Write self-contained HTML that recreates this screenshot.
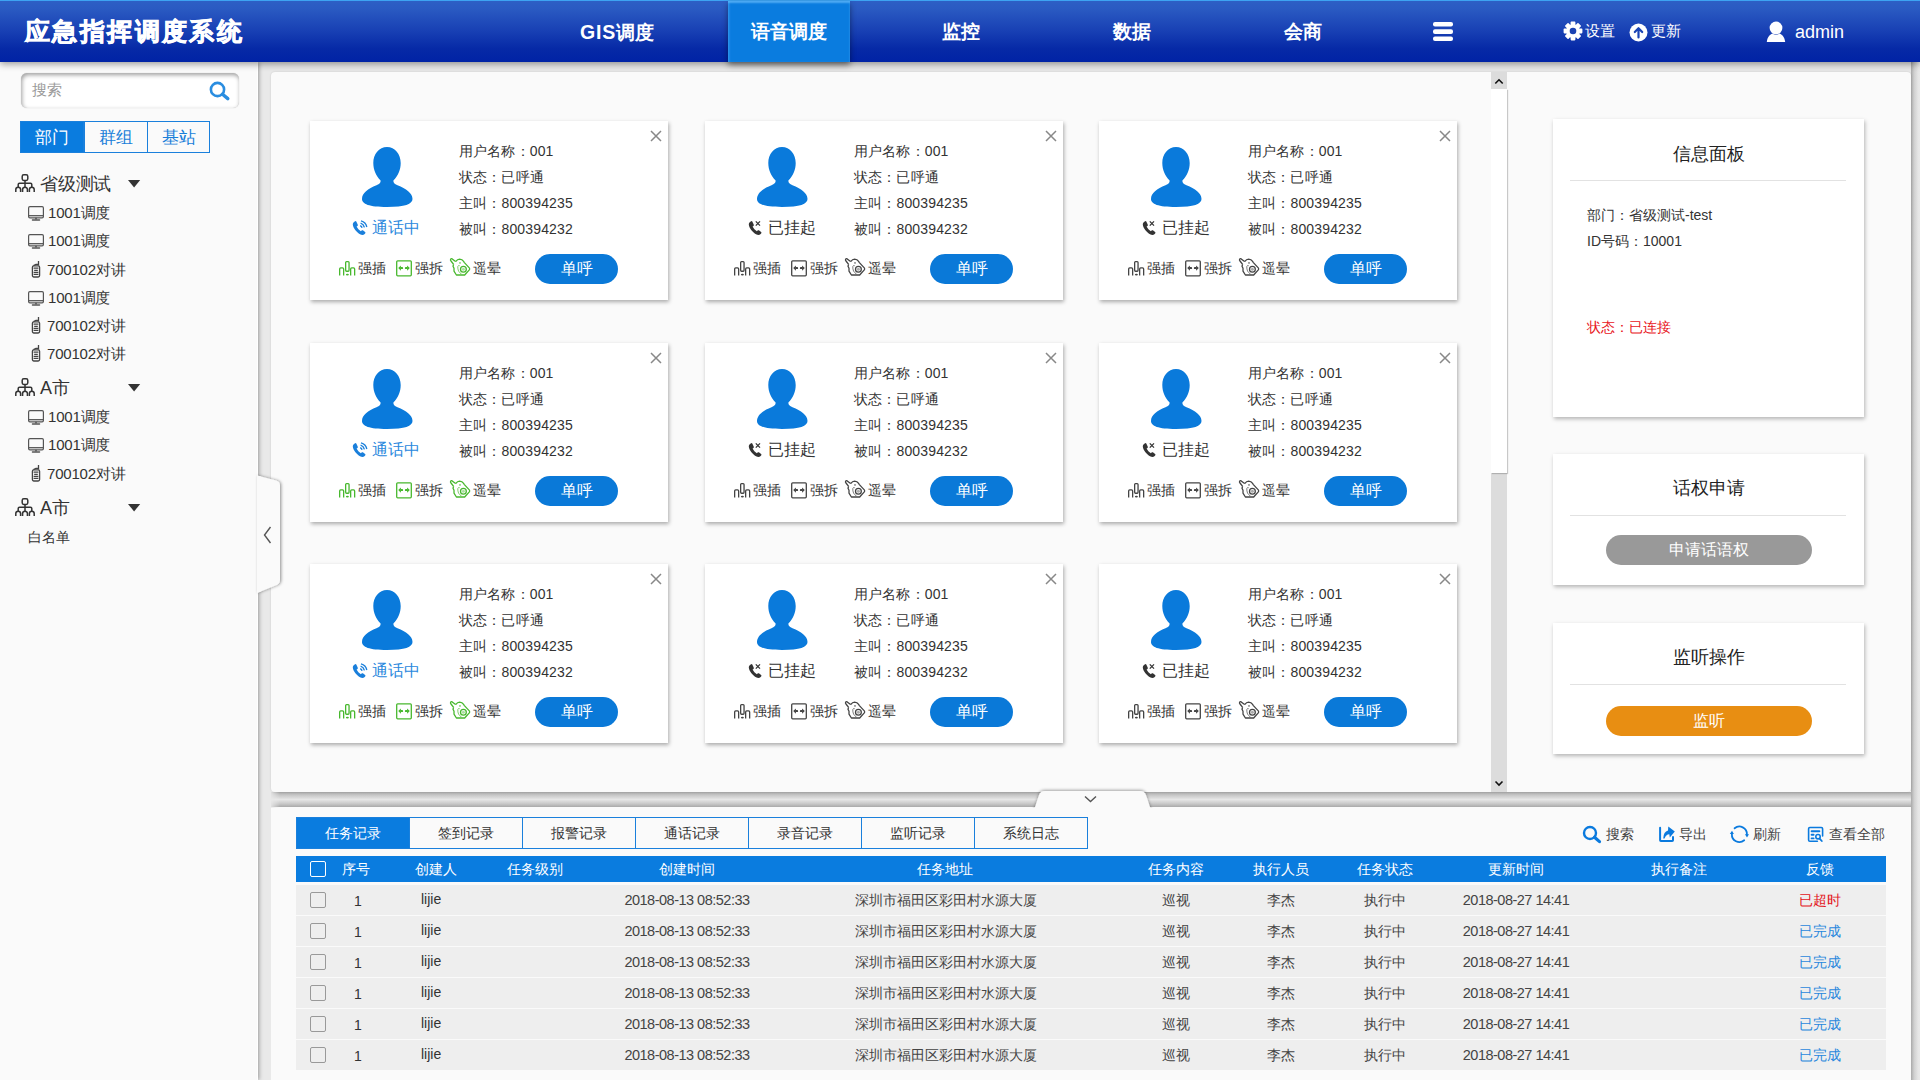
<!DOCTYPE html>
<html><head><meta charset="utf-8"><style>
*{box-sizing:border-box}
html,body{margin:0;padding:0}
body{width:1920px;height:1080px;overflow:hidden;position:relative;background:#e9e9e9;font-family:"Liberation Sans",sans-serif;color:#333}
.a{position:absolute;white-space:nowrap}
svg.a{overflow:visible}
#hdr{position:absolute;left:0;top:0;width:1920px;height:62px;background:linear-gradient(#2d5fc5 0px,#2a5ac2 8px,#1840b4 30px,#0629a6 48px,#0022a5 62px);border-top:1px solid #3da3f2;z-index:20;box-shadow:0 2px 7px rgba(0,0,0,.4)}
#title{position:absolute;left:25px;top:12px;font-size:25px;line-height:36px;font-weight:900;letter-spacing:2.4px;color:#fff;-webkit-text-stroke:.7px #fff}
.nav{position:absolute;top:0px;height:61px;line-height:62px;font-size:19px;font-weight:bold;color:#fff;text-align:center;white-space:nowrap}
.nav.act{background:#0a7cdf;box-shadow:0 3px 6px rgba(0,0,0,.45), inset 0 2px 2px rgba(120,200,255,.6), inset 2px 0 2px rgba(80,170,255,.25)}
#sidebar{position:absolute;left:0;top:62px;width:258px;height:1018px;background:#fafafa;z-index:5;box-shadow:1px 0 4px rgba(0,0,0,.35);border-right:1px solid #fff}
.panel{position:absolute;background:#fafafa;border-radius:4px;box-shadow:0 0 3px rgba(0,0,0,.25)}
.hicon{position:absolute;color:#fff;font-size:15px;line-height:20px;white-space:nowrap}
.sb{position:absolute;white-space:nowrap;color:#333;letter-spacing:-.2px}
.tab{position:absolute;top:121px;height:32px;line-height:31px;font-size:17px;text-align:center;color:#1a7fd9;border:1.5px solid #1a80dc;background:#fafafa}
.tab.on{background:#0a7cdf;color:#fff}
.card{position:absolute;width:358px;height:179px;background:#fff;box-shadow:1px 2px 4px rgba(0,0,0,.32)}
.card .t{position:absolute;left:149px;letter-spacing:.15px;font-size:14px;line-height:20px;color:#333;white-space:nowrap}
.rcard{position:absolute;left:1553px;width:311px;background:#fff;box-shadow:1px 2px 4px rgba(0,0,0,.28)}
.rcard .ttl{position:absolute;left:0;width:311px;text-align:center;font-size:18px;color:#222}
.rcard .sep{position:absolute;left:17px;width:276px;height:1px;background:#e2e2e2}
.btn{position:absolute;border-radius:15px;color:#fff;text-align:center;font-size:16px;line-height:30px;height:30px}
.btab{position:absolute;top:817px;width:114px;height:32px;border:1.5px solid #1a80dc;background:#fafafa;color:#333;text-align:center;font-size:14px;line-height:30px}
.btab.on{background:#0a7cdf;color:#fff}
.row{position:absolute;left:296px;width:1590px;height:30px;background:#eee}
.cell{position:absolute;white-space:nowrap;font-size:14px;line-height:20px;color:#333}
.dt{font-size:14.5px;letter-spacing:-.5px}
.th{position:absolute;top:859px;white-space:nowrap;font-size:14px;line-height:20px;color:#fff}
</style></head><body>
<div id="hdr">
  <div id="title">应急指挥调度系统</div>
  <div class="nav" style="left:556px;width:122px"><span style="letter-spacing:.8px;font-size:19.5px">GIS</span>调度</div>
  <div class="nav act" style="left:728px;width:122px">语音调度</div>
  <div class="nav" style="left:900px;width:122px">监控</div>
  <div class="nav" style="left:1071px;width:122px">数据</div>
  <div class="nav" style="left:1242px;width:122px">会商</div>
  <svg class="a" style="left:1432px;top:20px" width="22" height="22" viewBox="0 0 22 22"><rect x="1" y="1" width="20" height="4.6" rx="2" fill="#fff"/><rect x="1" y="8.3" width="20" height="4.6" rx="2" fill="#fff"/><rect x="1" y="15.5" width="20" height="4.6" rx="2" fill="#fff"/></svg>
  <svg class="a" style="left:1563px;top:20px" width="20" height="20" viewBox="0 0 20 20"><g fill="#fff"><circle cx="10" cy="10" r="6.8"/><rect x="7.6" y="0.6" width="4.8" height="4" rx=".8"/><rect x="7.6" y="15.4" width="4.8" height="4" rx=".8"/><rect x="0.6" y="7.6" width="4" height="4.8" rx=".8"/><rect x="15.4" y="7.6" width="4" height="4.8" rx=".8"/><g transform="rotate(45 10 10)"><rect x="7.6" y="0.6" width="4.8" height="4" rx=".8"/><rect x="7.6" y="15.4" width="4.8" height="4" rx=".8"/><rect x="0.6" y="7.6" width="4" height="4.8" rx=".8"/><rect x="15.4" y="7.6" width="4" height="4.8" rx=".8"/></g></g><circle cx="10" cy="10" r="3.3" fill="#1a42b3"/></svg>
  <div class="hicon" style="left:1585px;top:20px">设置</div>
  <svg class="a" style="left:1629px;top:22px" width="19" height="19" viewBox="0 0 19 19"><circle cx="9.5" cy="9.5" r="9" fill="#fff"/><path d="M9.5 14.5V5.5M5.8 9L9.5 5.2 13.2 9" stroke="#1a44b5" stroke-width="2.2" fill="none" stroke-linecap="round" stroke-linejoin="round"/></svg>
  <div class="hicon" style="left:1651px;top:20px">更新</div>
  <svg class="a" style="left:1766px;top:20px" width="20" height="22" viewBox="0 0 20 22"><circle cx="10" cy="7" r="6.4" fill="#fff"/><path d="M0.8 21C1.5 15.5 4.5 13.2 6.8 12.6 8 13.6 9 14 10 14 11 14 12 13.6 13.2 12.6 15.5 13.2 18.5 15.5 19.2 21Z" fill="#fff"/></svg>
  <div class="a" style="left:1795px;top:19px;font-size:18px;line-height:24px;color:#fff">admin</div>
</div>
<div id="sidebar"></div>
<div class="a" style="z-index:6;left:0;top:0">
<div class="a" style="left:21px;top:73px;width:218px;height:35px;border-radius:6px;background:#fff;box-shadow:inset 1px 2px 4px rgba(0,0,0,.38), 0 0 1px rgba(0,0,0,.25)"></div>
<div class="sb" style="left:32px;top:80px;font-size:15px;line-height:20px;color:#999">搜索</div>
<svg class="a" style="left:209px;top:81px" width="22" height="20" viewBox="0 0 22 20"><circle cx="8.5" cy="8.5" r="6.6" stroke="#2a8de0" stroke-width="2.6" fill="none"/><path d="M13.5 13.2L18.8 17.6" stroke="#2a8de0" stroke-width="3.4" stroke-linecap="round"/></svg>
<div class="tab on" style="left:20px;width:64px">部门</div>
<div class="tab" style="left:83.5px;width:65px">群组</div>
<div class="tab" style="left:147px;width:63px">基站</div>
<svg class="a" style="left:15px;top:174px" width="21" height="19" viewBox="0 0 21 19"><g fill="none" stroke="#333" stroke-width="1.5"><rect x="7.2" y="0.8" width="5.6" height="5.6" rx="1.6"/><path d="M10 6.4V13.2M3.2 13.2V10.6Q3.2 9.2 4.6 9.2H15.4Q16.8 9.2 16.8 10.6V13.2"/><path d="M0.8 18V15.6A2.4 2.4 0 0 1 5.6 15.6V18M7.6 18V15.6A2.4 2.4 0 0 1 12.4 15.6V18M14.4 18V15.6A2.4 2.4 0 0 1 19.2 15.6V18"/></g></svg>
<div class="sb" style="left:40px;top:172px;font-size:18px;line-height:24px;color:#333">省级测试</div>
<svg class="a" style="left:127.5px;top:180px" width="13" height="8" viewBox="0 0 13 8"><path d="M0 0H12.2L6.1 7.4Z" fill="#333"/></svg>
<svg class="a" style="left:28px;top:206px" width="17" height="15" viewBox="0 0 17 15"><g fill="none" stroke="#555" stroke-width="1.2"><rect x="0.6" y="0.6" width="14.8" height="11.2" rx="1.3"/><path d="M0.8 9.7H15.2" stroke-width="1.3"/><path d="M8 11.8V13.6" stroke-width="1.6"/><path d="M4.4 14H11.6" stroke-width="1.3" stroke-linecap="round"/></g></svg>
<div class="sb" style="left:48px;top:203px;font-size:15px;line-height:20px;color:#333">1001调度</div>
<svg class="a" style="left:28px;top:234px" width="17" height="15" viewBox="0 0 17 15"><g fill="none" stroke="#555" stroke-width="1.2"><rect x="0.6" y="0.6" width="14.8" height="11.2" rx="1.3"/><path d="M0.8 9.7H15.2" stroke-width="1.3"/><path d="M8 11.8V13.6" stroke-width="1.6"/><path d="M4.4 14H11.6" stroke-width="1.3" stroke-linecap="round"/></g></svg>
<div class="sb" style="left:48px;top:231px;font-size:15px;line-height:20px;color:#333">1001调度</div>
<svg class="a" style="left:31px;top:260px" width="10" height="18" viewBox="0 0 10 18"><g fill="none" stroke="#444" stroke-width="1.3"><path d="M7.5 1V5.5"/><path d="M2.5 5.6L5 4.3H7.5"/><rect x="1.4" y="5.8" width="7.2" height="11.2" rx="1.4"/><path d="M2.6 8.2H7.4M3.2 10.3H6.8M2.6 12.3H7.4M2.6 14.4H7.4"/></g></svg>
<div class="sb" style="left:47px;top:260px;font-size:15px;line-height:20px;color:#333">700102对讲</div>
<svg class="a" style="left:28px;top:291px" width="17" height="15" viewBox="0 0 17 15"><g fill="none" stroke="#555" stroke-width="1.2"><rect x="0.6" y="0.6" width="14.8" height="11.2" rx="1.3"/><path d="M0.8 9.7H15.2" stroke-width="1.3"/><path d="M8 11.8V13.6" stroke-width="1.6"/><path d="M4.4 14H11.6" stroke-width="1.3" stroke-linecap="round"/></g></svg>
<div class="sb" style="left:48px;top:288px;font-size:15px;line-height:20px;color:#333">1001调度</div>
<svg class="a" style="left:31px;top:316px" width="10" height="18" viewBox="0 0 10 18"><g fill="none" stroke="#444" stroke-width="1.3"><path d="M7.5 1V5.5"/><path d="M2.5 5.6L5 4.3H7.5"/><rect x="1.4" y="5.8" width="7.2" height="11.2" rx="1.4"/><path d="M2.6 8.2H7.4M3.2 10.3H6.8M2.6 12.3H7.4M2.6 14.4H7.4"/></g></svg>
<div class="sb" style="left:47px;top:316px;font-size:15px;line-height:20px;color:#333">700102对讲</div>
<svg class="a" style="left:31px;top:344px" width="10" height="18" viewBox="0 0 10 18"><g fill="none" stroke="#444" stroke-width="1.3"><path d="M7.5 1V5.5"/><path d="M2.5 5.6L5 4.3H7.5"/><rect x="1.4" y="5.8" width="7.2" height="11.2" rx="1.4"/><path d="M2.6 8.2H7.4M3.2 10.3H6.8M2.6 12.3H7.4M2.6 14.4H7.4"/></g></svg>
<div class="sb" style="left:47px;top:344px;font-size:15px;line-height:20px;color:#333">700102对讲</div>
<svg class="a" style="left:15px;top:378px" width="21" height="19" viewBox="0 0 21 19"><g fill="none" stroke="#333" stroke-width="1.5"><rect x="7.2" y="0.8" width="5.6" height="5.6" rx="1.6"/><path d="M10 6.4V13.2M3.2 13.2V10.6Q3.2 9.2 4.6 9.2H15.4Q16.8 9.2 16.8 10.6V13.2"/><path d="M0.8 18V15.6A2.4 2.4 0 0 1 5.6 15.6V18M7.6 18V15.6A2.4 2.4 0 0 1 12.4 15.6V18M14.4 18V15.6A2.4 2.4 0 0 1 19.2 15.6V18"/></g></svg>
<div class="sb" style="left:40px;top:376px;font-size:18px;line-height:24px;color:#333">A市</div>
<svg class="a" style="left:127.5px;top:384px" width="13" height="8" viewBox="0 0 13 8"><path d="M0 0H12.2L6.1 7.4Z" fill="#333"/></svg>
<svg class="a" style="left:28px;top:410px" width="17" height="15" viewBox="0 0 17 15"><g fill="none" stroke="#555" stroke-width="1.2"><rect x="0.6" y="0.6" width="14.8" height="11.2" rx="1.3"/><path d="M0.8 9.7H15.2" stroke-width="1.3"/><path d="M8 11.8V13.6" stroke-width="1.6"/><path d="M4.4 14H11.6" stroke-width="1.3" stroke-linecap="round"/></g></svg>
<div class="sb" style="left:48px;top:407px;font-size:15px;line-height:20px;color:#333">1001调度</div>
<svg class="a" style="left:28px;top:438px" width="17" height="15" viewBox="0 0 17 15"><g fill="none" stroke="#555" stroke-width="1.2"><rect x="0.6" y="0.6" width="14.8" height="11.2" rx="1.3"/><path d="M0.8 9.7H15.2" stroke-width="1.3"/><path d="M8 11.8V13.6" stroke-width="1.6"/><path d="M4.4 14H11.6" stroke-width="1.3" stroke-linecap="round"/></g></svg>
<div class="sb" style="left:48px;top:435px;font-size:15px;line-height:20px;color:#333">1001调度</div>
<svg class="a" style="left:31px;top:464px" width="10" height="18" viewBox="0 0 10 18"><g fill="none" stroke="#444" stroke-width="1.3"><path d="M7.5 1V5.5"/><path d="M2.5 5.6L5 4.3H7.5"/><rect x="1.4" y="5.8" width="7.2" height="11.2" rx="1.4"/><path d="M2.6 8.2H7.4M3.2 10.3H6.8M2.6 12.3H7.4M2.6 14.4H7.4"/></g></svg>
<div class="sb" style="left:47px;top:464px;font-size:15px;line-height:20px;color:#333">700102对讲</div>
<svg class="a" style="left:15px;top:498px" width="21" height="19" viewBox="0 0 21 19"><g fill="none" stroke="#333" stroke-width="1.5"><rect x="7.2" y="0.8" width="5.6" height="5.6" rx="1.6"/><path d="M10 6.4V13.2M3.2 13.2V10.6Q3.2 9.2 4.6 9.2H15.4Q16.8 9.2 16.8 10.6V13.2"/><path d="M0.8 18V15.6A2.4 2.4 0 0 1 5.6 15.6V18M7.6 18V15.6A2.4 2.4 0 0 1 12.4 15.6V18M14.4 18V15.6A2.4 2.4 0 0 1 19.2 15.6V18"/></g></svg>
<div class="sb" style="left:40px;top:496px;font-size:18px;line-height:24px;color:#333">A市</div>
<svg class="a" style="left:127.5px;top:504px" width="13" height="8" viewBox="0 0 13 8"><path d="M0 0H12.2L6.1 7.4Z" fill="#333"/></svg>
<div class="sb" style="left:28px;top:527px;font-size:14px;line-height:20px;color:#333">白名单</div>
</div>
<svg class="a" style="left:257px;top:470px;z-index:7" width="40" height="130" viewBox="0 0 40 130"><defs><filter id="hs" x="-50%" y="-20%" width="200%" height="140%"><feDropShadow dx="1.2" dy="0" stdDeviation="1.4" flood-opacity=".4"/></filter></defs><path d="M0 5.6L19 10.4Q23 11.4 23 15.6V110Q23 114 19 115.2L0 123Z" fill="#fafafa" filter="url(#hs)"/><path d="M0 5.6L4 6.56V121.5L0 123Z" fill="#fafafa"/><path d="M13.5 57L7.5 65 13.5 73" stroke="#555" stroke-width="1.4" fill="none"/></svg>
<div class="a" style="left:1911px;top:62px;width:9px;height:1018px;background:linear-gradient(to right,#a9a9a9,#d0d0d0 35%,#e6e6e6 80%,#e8e8e8)"></div>
<div class="a" style="left:271px;top:791px;width:1640px;height:17px;background:linear-gradient(#fafafa 0,#fafafa 1px,#a9a9a9 1px,#c6c6c6 4px,#e6e6e6 8.5px,#c6c6c6 13px,#a9a9a9 16px,#fafafa 16px);-webkit-mask-image:linear-gradient(to right,rgba(0,0,0,.15) 0,#000 9px)"></div>
<div class="panel" style="left:271px;top:72px;width:1640px;height:720px;box-shadow:0 0 2px rgba(0,0,0,.15)"></div>
<div class="a" style="left:1491px;top:72px;width:16px;height:720px;background:#dcdcdc"></div>
<div class="a" style="left:1491px;top:89px;width:16px;height:384px;background:#fff;box-shadow:1px 1px 1px rgba(0,0,0,.2)"></div>
<svg class="a" style="left:1491px;top:72px" width="16" height="17" viewBox="0 0 16 17"><path d="M4.3 11.5L8 7.8 11.7 11.5" stroke="#111" stroke-width="1.6" fill="none"/></svg>
<svg class="a" style="left:1491px;top:776px" width="16" height="16" viewBox="0 0 16 16"><path d="M4.5 5.5L8 9 11.5 5.5" stroke="#111" stroke-width="1.6" fill="none"/></svg>
<div class="card" style="left:310px;top:121px">
<svg class="a" style="left:340px;top:9px" width="12" height="12" viewBox="0 0 12 12"><path d="M1 1L11 11M11 1L1 11" stroke="#888" stroke-width="1.5"/></svg>
<svg class="a" style="left:51px;top:25px" width="52" height="62" viewBox="0 0 52 62"><path d="M26 1C18 1 12.3 8 12.3 17 12.3 24 15 29.5 19.6 34.6 19.8 36.8 18.6 38 15.5 39.2 7 42.5 1 47 1 53 1 58 8 61 26 61 44 61 51.5 58 51.5 53 51.5 47 45 42.5 36.5 39.2 33.4 38 32.2 36.8 32.4 34.6 37 29.5 39.7 24 39.7 17 39.7 8 34 1 26 1Z" fill="#0a7adb"/></svg>
<svg class="a" style="left:42px;top:99px" width="16" height="16" viewBox="0 0 16 16"><path d="M3.2 1.2C2 1.6 0.7 2.8 0.8 4.6 1 7.8 4.5 12.6 8.6 14.6 10.2 15.3 11.8 14.9 12.7 13.9L13.3 13.2C13.6 12.8 13.5 12.2 13.1 11.9L10.9 10.3C10.5 10 9.9 10.1 9.6 10.5L8.9 11.3C7.2 10.4 5.4 8.4 4.6 6.6L5.5 5.9C5.9 5.6 6 5 5.7 4.6L4.3 1.6C4.1 1.2 3.6 1 3.2 1.2Z" fill="#1a7fdb"/><path d="M8.2 5.6Q9.6 6.2 10.1 7.8M8.6 3.2Q11.6 4.2 12.4 7.4M9 0.9Q13.8 2.2 14.8 7" stroke="#1a7fdb" stroke-width="1.4" fill="none"/></svg>
<div class="a" style="left:62px;top:96px;font-size:16px;line-height:22px;color:#2a88dd">通话中</div>
<div class="t" style="top:20px">用户名称：001</div>
<div class="t" style="top:46px">状态：已呼通</div>
<div class="t" style="top:72px">主叫：800394235</div>
<div class="t" style="top:98px">被叫：800394232</div>
<svg class="a" style="left:29px;top:139px" width="17" height="17" viewBox="0 0 17 17"><g fill="none" stroke="#48b82e" stroke-width="1.3"><path d="M0.65 15.6V8.9Q0.65 7.8 1.7 7.8H3.6Q4.65 7.8 4.65 8.9V15.6"/><path d="M11.65 15.6V8.9Q11.65 7.8 12.7 7.8H14.6Q15.65 7.8 15.65 8.9V15.6"/><rect x="6.65" y="1.65" width="3.4" height="9.6" rx="0.9"/></g><ellipse cx="8.35" cy="14.6" rx="1.5" ry="0.95" fill="#48b82e"/></svg><svg class="a" style="left:86px;top:139px" width="16" height="17" viewBox="0 0 16 17"><rect x="0.7" y="0.8" width="14.6" height="15" rx="1" fill="none" stroke="#48b82e" stroke-width="1.3"/><path d="M2.2 8.1L4.9 5.4V10.8ZM13.8 8.1L11.1 5.4V10.8Z" fill="#48b82e"/><rect x="4.3" y="7.1" width="2.8" height="2" rx=".9" fill="#48b82e"/><rect x="8.9" y="7.1" width="2.8" height="2" rx=".9" fill="#48b82e"/></svg><svg class="a" style="left:140px;top:136.5px" width="21" height="19" viewBox="0 0 21 19"><g fill="none" stroke="#48b82e" stroke-width="1.3" stroke-linejoin="round"><path d="M5.6 3.6L2.2 0.9Q1.1 0.3 0.6 1.2Q0.2 2.2 1 3L3.6 6.4"/><path d="M5.6 3.6Q7.6 1.1 9.5 1.1Q12.3 1.4 13.4 3.2L14.4 4.6L19.3 9.9Q20.1 10.9 19.3 11.9L14.7 17H6.4L4 13.1V10.3L3 8.2L3.6 6.4"/><circle cx="13.4" cy="11.3" r="2.9"/><path d="M11.4 16.2L8.6 13.2Q7.6 10.8 7.8 8.6Q8.3 7 9.7 7.7" stroke-width="1" opacity=".7"/></g><circle cx="13.4" cy="11.3" r="1.5" fill="#48b82e" opacity=".45"/><ellipse cx="10" cy="4.9" rx=".9" ry=".6" fill="#48b82e"/></svg>
<div class="a" style="left:48px;top:137px;font-size:14px;line-height:20px;color:#333">强插</div>
<div class="a" style="left:105px;top:137px;font-size:14px;line-height:20px;color:#333">强拆</div>
<div class="a" style="left:163px;top:137px;font-size:14px;line-height:20px;color:#333">遥晕</div>
<div class="btn" style="left:225px;top:133px;width:83px;background:#0a79d8">单呼</div>
</div>
<div class="card" style="left:705px;top:121px">
<svg class="a" style="left:340px;top:9px" width="12" height="12" viewBox="0 0 12 12"><path d="M1 1L11 11M11 1L1 11" stroke="#888" stroke-width="1.5"/></svg>
<svg class="a" style="left:51px;top:25px" width="52" height="62" viewBox="0 0 52 62"><path d="M26 1C18 1 12.3 8 12.3 17 12.3 24 15 29.5 19.6 34.6 19.8 36.8 18.6 38 15.5 39.2 7 42.5 1 47 1 53 1 58 8 61 26 61 44 61 51.5 58 51.5 53 51.5 47 45 42.5 36.5 39.2 33.4 38 32.2 36.8 32.4 34.6 37 29.5 39.7 24 39.7 17 39.7 8 34 1 26 1Z" fill="#0a7adb"/></svg>
<svg class="a" style="left:43px;top:99px" width="14" height="16" viewBox="0 0 14 16"><path d="M3.2 1.2C2 1.6 0.7 2.8 0.8 4.6 1 7.8 4.5 12.6 8.6 14.6 10.2 15.3 11.8 14.9 12.7 13.9L13.3 13.2C13.6 12.8 13.5 12.2 13.1 11.9L10.9 10.3C10.5 10 9.9 10.1 9.6 10.5L8.9 11.3C7.2 10.4 5.4 8.4 4.6 6.6L5.5 5.9C5.9 5.6 6 5 5.7 4.6L4.3 1.6C4.1 1.2 3.6 1 3.2 1.2Z" fill="#333"/><path d="M7.8 1.4L12 5.6M12 1.4L7.8 5.6" stroke="#333" stroke-width="1.3"/></svg>
<div class="a" style="left:63px;top:96px;font-size:16px;line-height:22px;color:#333">已挂起</div>
<div class="t" style="top:20px">用户名称：001</div>
<div class="t" style="top:46px">状态：已呼通</div>
<div class="t" style="top:72px">主叫：800394235</div>
<div class="t" style="top:98px">被叫：800394232</div>
<svg class="a" style="left:29px;top:139px" width="17" height="17" viewBox="0 0 17 17"><g fill="none" stroke="#444" stroke-width="1.3"><path d="M0.65 15.6V8.9Q0.65 7.8 1.7 7.8H3.6Q4.65 7.8 4.65 8.9V15.6"/><path d="M11.65 15.6V8.9Q11.65 7.8 12.7 7.8H14.6Q15.65 7.8 15.65 8.9V15.6"/><rect x="6.65" y="1.65" width="3.4" height="9.6" rx="0.9"/></g><ellipse cx="8.35" cy="14.6" rx="1.5" ry="0.95" fill="#444"/></svg><svg class="a" style="left:86px;top:139px" width="16" height="17" viewBox="0 0 16 17"><rect x="0.7" y="0.8" width="14.6" height="15" rx="1" fill="none" stroke="#444" stroke-width="1.3"/><path d="M2.2 8.1L4.9 5.4V10.8ZM13.8 8.1L11.1 5.4V10.8Z" fill="#444"/><rect x="4.3" y="7.1" width="2.8" height="2" rx=".9" fill="#444"/><rect x="8.9" y="7.1" width="2.8" height="2" rx=".9" fill="#444"/></svg><svg class="a" style="left:140px;top:136.5px" width="21" height="19" viewBox="0 0 21 19"><g fill="none" stroke="#444" stroke-width="1.3" stroke-linejoin="round"><path d="M5.6 3.6L2.2 0.9Q1.1 0.3 0.6 1.2Q0.2 2.2 1 3L3.6 6.4"/><path d="M5.6 3.6Q7.6 1.1 9.5 1.1Q12.3 1.4 13.4 3.2L14.4 4.6L19.3 9.9Q20.1 10.9 19.3 11.9L14.7 17H6.4L4 13.1V10.3L3 8.2L3.6 6.4"/><circle cx="13.4" cy="11.3" r="2.9"/><path d="M11.4 16.2L8.6 13.2Q7.6 10.8 7.8 8.6Q8.3 7 9.7 7.7" stroke-width="1" opacity=".7"/></g><circle cx="13.4" cy="11.3" r="1.5" fill="#444" opacity=".45"/><ellipse cx="10" cy="4.9" rx=".9" ry=".6" fill="#444"/></svg>
<div class="a" style="left:48px;top:137px;font-size:14px;line-height:20px;color:#333">强插</div>
<div class="a" style="left:105px;top:137px;font-size:14px;line-height:20px;color:#333">强拆</div>
<div class="a" style="left:163px;top:137px;font-size:14px;line-height:20px;color:#333">遥晕</div>
<div class="btn" style="left:225px;top:133px;width:83px;background:#0a79d8">单呼</div>
</div>
<div class="card" style="left:1099px;top:121px">
<svg class="a" style="left:340px;top:9px" width="12" height="12" viewBox="0 0 12 12"><path d="M1 1L11 11M11 1L1 11" stroke="#888" stroke-width="1.5"/></svg>
<svg class="a" style="left:51px;top:25px" width="52" height="62" viewBox="0 0 52 62"><path d="M26 1C18 1 12.3 8 12.3 17 12.3 24 15 29.5 19.6 34.6 19.8 36.8 18.6 38 15.5 39.2 7 42.5 1 47 1 53 1 58 8 61 26 61 44 61 51.5 58 51.5 53 51.5 47 45 42.5 36.5 39.2 33.4 38 32.2 36.8 32.4 34.6 37 29.5 39.7 24 39.7 17 39.7 8 34 1 26 1Z" fill="#0a7adb"/></svg>
<svg class="a" style="left:43px;top:99px" width="14" height="16" viewBox="0 0 14 16"><path d="M3.2 1.2C2 1.6 0.7 2.8 0.8 4.6 1 7.8 4.5 12.6 8.6 14.6 10.2 15.3 11.8 14.9 12.7 13.9L13.3 13.2C13.6 12.8 13.5 12.2 13.1 11.9L10.9 10.3C10.5 10 9.9 10.1 9.6 10.5L8.9 11.3C7.2 10.4 5.4 8.4 4.6 6.6L5.5 5.9C5.9 5.6 6 5 5.7 4.6L4.3 1.6C4.1 1.2 3.6 1 3.2 1.2Z" fill="#333"/><path d="M7.8 1.4L12 5.6M12 1.4L7.8 5.6" stroke="#333" stroke-width="1.3"/></svg>
<div class="a" style="left:63px;top:96px;font-size:16px;line-height:22px;color:#333">已挂起</div>
<div class="t" style="top:20px">用户名称：001</div>
<div class="t" style="top:46px">状态：已呼通</div>
<div class="t" style="top:72px">主叫：800394235</div>
<div class="t" style="top:98px">被叫：800394232</div>
<svg class="a" style="left:29px;top:139px" width="17" height="17" viewBox="0 0 17 17"><g fill="none" stroke="#444" stroke-width="1.3"><path d="M0.65 15.6V8.9Q0.65 7.8 1.7 7.8H3.6Q4.65 7.8 4.65 8.9V15.6"/><path d="M11.65 15.6V8.9Q11.65 7.8 12.7 7.8H14.6Q15.65 7.8 15.65 8.9V15.6"/><rect x="6.65" y="1.65" width="3.4" height="9.6" rx="0.9"/></g><ellipse cx="8.35" cy="14.6" rx="1.5" ry="0.95" fill="#444"/></svg><svg class="a" style="left:86px;top:139px" width="16" height="17" viewBox="0 0 16 17"><rect x="0.7" y="0.8" width="14.6" height="15" rx="1" fill="none" stroke="#444" stroke-width="1.3"/><path d="M2.2 8.1L4.9 5.4V10.8ZM13.8 8.1L11.1 5.4V10.8Z" fill="#444"/><rect x="4.3" y="7.1" width="2.8" height="2" rx=".9" fill="#444"/><rect x="8.9" y="7.1" width="2.8" height="2" rx=".9" fill="#444"/></svg><svg class="a" style="left:140px;top:136.5px" width="21" height="19" viewBox="0 0 21 19"><g fill="none" stroke="#444" stroke-width="1.3" stroke-linejoin="round"><path d="M5.6 3.6L2.2 0.9Q1.1 0.3 0.6 1.2Q0.2 2.2 1 3L3.6 6.4"/><path d="M5.6 3.6Q7.6 1.1 9.5 1.1Q12.3 1.4 13.4 3.2L14.4 4.6L19.3 9.9Q20.1 10.9 19.3 11.9L14.7 17H6.4L4 13.1V10.3L3 8.2L3.6 6.4"/><circle cx="13.4" cy="11.3" r="2.9"/><path d="M11.4 16.2L8.6 13.2Q7.6 10.8 7.8 8.6Q8.3 7 9.7 7.7" stroke-width="1" opacity=".7"/></g><circle cx="13.4" cy="11.3" r="1.5" fill="#444" opacity=".45"/><ellipse cx="10" cy="4.9" rx=".9" ry=".6" fill="#444"/></svg>
<div class="a" style="left:48px;top:137px;font-size:14px;line-height:20px;color:#333">强插</div>
<div class="a" style="left:105px;top:137px;font-size:14px;line-height:20px;color:#333">强拆</div>
<div class="a" style="left:163px;top:137px;font-size:14px;line-height:20px;color:#333">遥晕</div>
<div class="btn" style="left:225px;top:133px;width:83px;background:#0a79d8">单呼</div>
</div>
<div class="card" style="left:310px;top:343px">
<svg class="a" style="left:340px;top:9px" width="12" height="12" viewBox="0 0 12 12"><path d="M1 1L11 11M11 1L1 11" stroke="#888" stroke-width="1.5"/></svg>
<svg class="a" style="left:51px;top:25px" width="52" height="62" viewBox="0 0 52 62"><path d="M26 1C18 1 12.3 8 12.3 17 12.3 24 15 29.5 19.6 34.6 19.8 36.8 18.6 38 15.5 39.2 7 42.5 1 47 1 53 1 58 8 61 26 61 44 61 51.5 58 51.5 53 51.5 47 45 42.5 36.5 39.2 33.4 38 32.2 36.8 32.4 34.6 37 29.5 39.7 24 39.7 17 39.7 8 34 1 26 1Z" fill="#0a7adb"/></svg>
<svg class="a" style="left:42px;top:99px" width="16" height="16" viewBox="0 0 16 16"><path d="M3.2 1.2C2 1.6 0.7 2.8 0.8 4.6 1 7.8 4.5 12.6 8.6 14.6 10.2 15.3 11.8 14.9 12.7 13.9L13.3 13.2C13.6 12.8 13.5 12.2 13.1 11.9L10.9 10.3C10.5 10 9.9 10.1 9.6 10.5L8.9 11.3C7.2 10.4 5.4 8.4 4.6 6.6L5.5 5.9C5.9 5.6 6 5 5.7 4.6L4.3 1.6C4.1 1.2 3.6 1 3.2 1.2Z" fill="#1a7fdb"/><path d="M8.2 5.6Q9.6 6.2 10.1 7.8M8.6 3.2Q11.6 4.2 12.4 7.4M9 0.9Q13.8 2.2 14.8 7" stroke="#1a7fdb" stroke-width="1.4" fill="none"/></svg>
<div class="a" style="left:62px;top:96px;font-size:16px;line-height:22px;color:#2a88dd">通话中</div>
<div class="t" style="top:20px">用户名称：001</div>
<div class="t" style="top:46px">状态：已呼通</div>
<div class="t" style="top:72px">主叫：800394235</div>
<div class="t" style="top:98px">被叫：800394232</div>
<svg class="a" style="left:29px;top:139px" width="17" height="17" viewBox="0 0 17 17"><g fill="none" stroke="#48b82e" stroke-width="1.3"><path d="M0.65 15.6V8.9Q0.65 7.8 1.7 7.8H3.6Q4.65 7.8 4.65 8.9V15.6"/><path d="M11.65 15.6V8.9Q11.65 7.8 12.7 7.8H14.6Q15.65 7.8 15.65 8.9V15.6"/><rect x="6.65" y="1.65" width="3.4" height="9.6" rx="0.9"/></g><ellipse cx="8.35" cy="14.6" rx="1.5" ry="0.95" fill="#48b82e"/></svg><svg class="a" style="left:86px;top:139px" width="16" height="17" viewBox="0 0 16 17"><rect x="0.7" y="0.8" width="14.6" height="15" rx="1" fill="none" stroke="#48b82e" stroke-width="1.3"/><path d="M2.2 8.1L4.9 5.4V10.8ZM13.8 8.1L11.1 5.4V10.8Z" fill="#48b82e"/><rect x="4.3" y="7.1" width="2.8" height="2" rx=".9" fill="#48b82e"/><rect x="8.9" y="7.1" width="2.8" height="2" rx=".9" fill="#48b82e"/></svg><svg class="a" style="left:140px;top:136.5px" width="21" height="19" viewBox="0 0 21 19"><g fill="none" stroke="#48b82e" stroke-width="1.3" stroke-linejoin="round"><path d="M5.6 3.6L2.2 0.9Q1.1 0.3 0.6 1.2Q0.2 2.2 1 3L3.6 6.4"/><path d="M5.6 3.6Q7.6 1.1 9.5 1.1Q12.3 1.4 13.4 3.2L14.4 4.6L19.3 9.9Q20.1 10.9 19.3 11.9L14.7 17H6.4L4 13.1V10.3L3 8.2L3.6 6.4"/><circle cx="13.4" cy="11.3" r="2.9"/><path d="M11.4 16.2L8.6 13.2Q7.6 10.8 7.8 8.6Q8.3 7 9.7 7.7" stroke-width="1" opacity=".7"/></g><circle cx="13.4" cy="11.3" r="1.5" fill="#48b82e" opacity=".45"/><ellipse cx="10" cy="4.9" rx=".9" ry=".6" fill="#48b82e"/></svg>
<div class="a" style="left:48px;top:137px;font-size:14px;line-height:20px;color:#333">强插</div>
<div class="a" style="left:105px;top:137px;font-size:14px;line-height:20px;color:#333">强拆</div>
<div class="a" style="left:163px;top:137px;font-size:14px;line-height:20px;color:#333">遥晕</div>
<div class="btn" style="left:225px;top:133px;width:83px;background:#0a79d8">单呼</div>
</div>
<div class="card" style="left:705px;top:343px">
<svg class="a" style="left:340px;top:9px" width="12" height="12" viewBox="0 0 12 12"><path d="M1 1L11 11M11 1L1 11" stroke="#888" stroke-width="1.5"/></svg>
<svg class="a" style="left:51px;top:25px" width="52" height="62" viewBox="0 0 52 62"><path d="M26 1C18 1 12.3 8 12.3 17 12.3 24 15 29.5 19.6 34.6 19.8 36.8 18.6 38 15.5 39.2 7 42.5 1 47 1 53 1 58 8 61 26 61 44 61 51.5 58 51.5 53 51.5 47 45 42.5 36.5 39.2 33.4 38 32.2 36.8 32.4 34.6 37 29.5 39.7 24 39.7 17 39.7 8 34 1 26 1Z" fill="#0a7adb"/></svg>
<svg class="a" style="left:43px;top:99px" width="14" height="16" viewBox="0 0 14 16"><path d="M3.2 1.2C2 1.6 0.7 2.8 0.8 4.6 1 7.8 4.5 12.6 8.6 14.6 10.2 15.3 11.8 14.9 12.7 13.9L13.3 13.2C13.6 12.8 13.5 12.2 13.1 11.9L10.9 10.3C10.5 10 9.9 10.1 9.6 10.5L8.9 11.3C7.2 10.4 5.4 8.4 4.6 6.6L5.5 5.9C5.9 5.6 6 5 5.7 4.6L4.3 1.6C4.1 1.2 3.6 1 3.2 1.2Z" fill="#333"/><path d="M7.8 1.4L12 5.6M12 1.4L7.8 5.6" stroke="#333" stroke-width="1.3"/></svg>
<div class="a" style="left:63px;top:96px;font-size:16px;line-height:22px;color:#333">已挂起</div>
<div class="t" style="top:20px">用户名称：001</div>
<div class="t" style="top:46px">状态：已呼通</div>
<div class="t" style="top:72px">主叫：800394235</div>
<div class="t" style="top:98px">被叫：800394232</div>
<svg class="a" style="left:29px;top:139px" width="17" height="17" viewBox="0 0 17 17"><g fill="none" stroke="#444" stroke-width="1.3"><path d="M0.65 15.6V8.9Q0.65 7.8 1.7 7.8H3.6Q4.65 7.8 4.65 8.9V15.6"/><path d="M11.65 15.6V8.9Q11.65 7.8 12.7 7.8H14.6Q15.65 7.8 15.65 8.9V15.6"/><rect x="6.65" y="1.65" width="3.4" height="9.6" rx="0.9"/></g><ellipse cx="8.35" cy="14.6" rx="1.5" ry="0.95" fill="#444"/></svg><svg class="a" style="left:86px;top:139px" width="16" height="17" viewBox="0 0 16 17"><rect x="0.7" y="0.8" width="14.6" height="15" rx="1" fill="none" stroke="#444" stroke-width="1.3"/><path d="M2.2 8.1L4.9 5.4V10.8ZM13.8 8.1L11.1 5.4V10.8Z" fill="#444"/><rect x="4.3" y="7.1" width="2.8" height="2" rx=".9" fill="#444"/><rect x="8.9" y="7.1" width="2.8" height="2" rx=".9" fill="#444"/></svg><svg class="a" style="left:140px;top:136.5px" width="21" height="19" viewBox="0 0 21 19"><g fill="none" stroke="#444" stroke-width="1.3" stroke-linejoin="round"><path d="M5.6 3.6L2.2 0.9Q1.1 0.3 0.6 1.2Q0.2 2.2 1 3L3.6 6.4"/><path d="M5.6 3.6Q7.6 1.1 9.5 1.1Q12.3 1.4 13.4 3.2L14.4 4.6L19.3 9.9Q20.1 10.9 19.3 11.9L14.7 17H6.4L4 13.1V10.3L3 8.2L3.6 6.4"/><circle cx="13.4" cy="11.3" r="2.9"/><path d="M11.4 16.2L8.6 13.2Q7.6 10.8 7.8 8.6Q8.3 7 9.7 7.7" stroke-width="1" opacity=".7"/></g><circle cx="13.4" cy="11.3" r="1.5" fill="#444" opacity=".45"/><ellipse cx="10" cy="4.9" rx=".9" ry=".6" fill="#444"/></svg>
<div class="a" style="left:48px;top:137px;font-size:14px;line-height:20px;color:#333">强插</div>
<div class="a" style="left:105px;top:137px;font-size:14px;line-height:20px;color:#333">强拆</div>
<div class="a" style="left:163px;top:137px;font-size:14px;line-height:20px;color:#333">遥晕</div>
<div class="btn" style="left:225px;top:133px;width:83px;background:#0a79d8">单呼</div>
</div>
<div class="card" style="left:1099px;top:343px">
<svg class="a" style="left:340px;top:9px" width="12" height="12" viewBox="0 0 12 12"><path d="M1 1L11 11M11 1L1 11" stroke="#888" stroke-width="1.5"/></svg>
<svg class="a" style="left:51px;top:25px" width="52" height="62" viewBox="0 0 52 62"><path d="M26 1C18 1 12.3 8 12.3 17 12.3 24 15 29.5 19.6 34.6 19.8 36.8 18.6 38 15.5 39.2 7 42.5 1 47 1 53 1 58 8 61 26 61 44 61 51.5 58 51.5 53 51.5 47 45 42.5 36.5 39.2 33.4 38 32.2 36.8 32.4 34.6 37 29.5 39.7 24 39.7 17 39.7 8 34 1 26 1Z" fill="#0a7adb"/></svg>
<svg class="a" style="left:43px;top:99px" width="14" height="16" viewBox="0 0 14 16"><path d="M3.2 1.2C2 1.6 0.7 2.8 0.8 4.6 1 7.8 4.5 12.6 8.6 14.6 10.2 15.3 11.8 14.9 12.7 13.9L13.3 13.2C13.6 12.8 13.5 12.2 13.1 11.9L10.9 10.3C10.5 10 9.9 10.1 9.6 10.5L8.9 11.3C7.2 10.4 5.4 8.4 4.6 6.6L5.5 5.9C5.9 5.6 6 5 5.7 4.6L4.3 1.6C4.1 1.2 3.6 1 3.2 1.2Z" fill="#333"/><path d="M7.8 1.4L12 5.6M12 1.4L7.8 5.6" stroke="#333" stroke-width="1.3"/></svg>
<div class="a" style="left:63px;top:96px;font-size:16px;line-height:22px;color:#333">已挂起</div>
<div class="t" style="top:20px">用户名称：001</div>
<div class="t" style="top:46px">状态：已呼通</div>
<div class="t" style="top:72px">主叫：800394235</div>
<div class="t" style="top:98px">被叫：800394232</div>
<svg class="a" style="left:29px;top:139px" width="17" height="17" viewBox="0 0 17 17"><g fill="none" stroke="#444" stroke-width="1.3"><path d="M0.65 15.6V8.9Q0.65 7.8 1.7 7.8H3.6Q4.65 7.8 4.65 8.9V15.6"/><path d="M11.65 15.6V8.9Q11.65 7.8 12.7 7.8H14.6Q15.65 7.8 15.65 8.9V15.6"/><rect x="6.65" y="1.65" width="3.4" height="9.6" rx="0.9"/></g><ellipse cx="8.35" cy="14.6" rx="1.5" ry="0.95" fill="#444"/></svg><svg class="a" style="left:86px;top:139px" width="16" height="17" viewBox="0 0 16 17"><rect x="0.7" y="0.8" width="14.6" height="15" rx="1" fill="none" stroke="#444" stroke-width="1.3"/><path d="M2.2 8.1L4.9 5.4V10.8ZM13.8 8.1L11.1 5.4V10.8Z" fill="#444"/><rect x="4.3" y="7.1" width="2.8" height="2" rx=".9" fill="#444"/><rect x="8.9" y="7.1" width="2.8" height="2" rx=".9" fill="#444"/></svg><svg class="a" style="left:140px;top:136.5px" width="21" height="19" viewBox="0 0 21 19"><g fill="none" stroke="#444" stroke-width="1.3" stroke-linejoin="round"><path d="M5.6 3.6L2.2 0.9Q1.1 0.3 0.6 1.2Q0.2 2.2 1 3L3.6 6.4"/><path d="M5.6 3.6Q7.6 1.1 9.5 1.1Q12.3 1.4 13.4 3.2L14.4 4.6L19.3 9.9Q20.1 10.9 19.3 11.9L14.7 17H6.4L4 13.1V10.3L3 8.2L3.6 6.4"/><circle cx="13.4" cy="11.3" r="2.9"/><path d="M11.4 16.2L8.6 13.2Q7.6 10.8 7.8 8.6Q8.3 7 9.7 7.7" stroke-width="1" opacity=".7"/></g><circle cx="13.4" cy="11.3" r="1.5" fill="#444" opacity=".45"/><ellipse cx="10" cy="4.9" rx=".9" ry=".6" fill="#444"/></svg>
<div class="a" style="left:48px;top:137px;font-size:14px;line-height:20px;color:#333">强插</div>
<div class="a" style="left:105px;top:137px;font-size:14px;line-height:20px;color:#333">强拆</div>
<div class="a" style="left:163px;top:137px;font-size:14px;line-height:20px;color:#333">遥晕</div>
<div class="btn" style="left:225px;top:133px;width:83px;background:#0a79d8">单呼</div>
</div>
<div class="card" style="left:310px;top:564px">
<svg class="a" style="left:340px;top:9px" width="12" height="12" viewBox="0 0 12 12"><path d="M1 1L11 11M11 1L1 11" stroke="#888" stroke-width="1.5"/></svg>
<svg class="a" style="left:51px;top:25px" width="52" height="62" viewBox="0 0 52 62"><path d="M26 1C18 1 12.3 8 12.3 17 12.3 24 15 29.5 19.6 34.6 19.8 36.8 18.6 38 15.5 39.2 7 42.5 1 47 1 53 1 58 8 61 26 61 44 61 51.5 58 51.5 53 51.5 47 45 42.5 36.5 39.2 33.4 38 32.2 36.8 32.4 34.6 37 29.5 39.7 24 39.7 17 39.7 8 34 1 26 1Z" fill="#0a7adb"/></svg>
<svg class="a" style="left:42px;top:99px" width="16" height="16" viewBox="0 0 16 16"><path d="M3.2 1.2C2 1.6 0.7 2.8 0.8 4.6 1 7.8 4.5 12.6 8.6 14.6 10.2 15.3 11.8 14.9 12.7 13.9L13.3 13.2C13.6 12.8 13.5 12.2 13.1 11.9L10.9 10.3C10.5 10 9.9 10.1 9.6 10.5L8.9 11.3C7.2 10.4 5.4 8.4 4.6 6.6L5.5 5.9C5.9 5.6 6 5 5.7 4.6L4.3 1.6C4.1 1.2 3.6 1 3.2 1.2Z" fill="#1a7fdb"/><path d="M8.2 5.6Q9.6 6.2 10.1 7.8M8.6 3.2Q11.6 4.2 12.4 7.4M9 0.9Q13.8 2.2 14.8 7" stroke="#1a7fdb" stroke-width="1.4" fill="none"/></svg>
<div class="a" style="left:62px;top:96px;font-size:16px;line-height:22px;color:#2a88dd">通话中</div>
<div class="t" style="top:20px">用户名称：001</div>
<div class="t" style="top:46px">状态：已呼通</div>
<div class="t" style="top:72px">主叫：800394235</div>
<div class="t" style="top:98px">被叫：800394232</div>
<svg class="a" style="left:29px;top:139px" width="17" height="17" viewBox="0 0 17 17"><g fill="none" stroke="#48b82e" stroke-width="1.3"><path d="M0.65 15.6V8.9Q0.65 7.8 1.7 7.8H3.6Q4.65 7.8 4.65 8.9V15.6"/><path d="M11.65 15.6V8.9Q11.65 7.8 12.7 7.8H14.6Q15.65 7.8 15.65 8.9V15.6"/><rect x="6.65" y="1.65" width="3.4" height="9.6" rx="0.9"/></g><ellipse cx="8.35" cy="14.6" rx="1.5" ry="0.95" fill="#48b82e"/></svg><svg class="a" style="left:86px;top:139px" width="16" height="17" viewBox="0 0 16 17"><rect x="0.7" y="0.8" width="14.6" height="15" rx="1" fill="none" stroke="#48b82e" stroke-width="1.3"/><path d="M2.2 8.1L4.9 5.4V10.8ZM13.8 8.1L11.1 5.4V10.8Z" fill="#48b82e"/><rect x="4.3" y="7.1" width="2.8" height="2" rx=".9" fill="#48b82e"/><rect x="8.9" y="7.1" width="2.8" height="2" rx=".9" fill="#48b82e"/></svg><svg class="a" style="left:140px;top:136.5px" width="21" height="19" viewBox="0 0 21 19"><g fill="none" stroke="#48b82e" stroke-width="1.3" stroke-linejoin="round"><path d="M5.6 3.6L2.2 0.9Q1.1 0.3 0.6 1.2Q0.2 2.2 1 3L3.6 6.4"/><path d="M5.6 3.6Q7.6 1.1 9.5 1.1Q12.3 1.4 13.4 3.2L14.4 4.6L19.3 9.9Q20.1 10.9 19.3 11.9L14.7 17H6.4L4 13.1V10.3L3 8.2L3.6 6.4"/><circle cx="13.4" cy="11.3" r="2.9"/><path d="M11.4 16.2L8.6 13.2Q7.6 10.8 7.8 8.6Q8.3 7 9.7 7.7" stroke-width="1" opacity=".7"/></g><circle cx="13.4" cy="11.3" r="1.5" fill="#48b82e" opacity=".45"/><ellipse cx="10" cy="4.9" rx=".9" ry=".6" fill="#48b82e"/></svg>
<div class="a" style="left:48px;top:137px;font-size:14px;line-height:20px;color:#333">强插</div>
<div class="a" style="left:105px;top:137px;font-size:14px;line-height:20px;color:#333">强拆</div>
<div class="a" style="left:163px;top:137px;font-size:14px;line-height:20px;color:#333">遥晕</div>
<div class="btn" style="left:225px;top:133px;width:83px;background:#0a79d8">单呼</div>
</div>
<div class="card" style="left:705px;top:564px">
<svg class="a" style="left:340px;top:9px" width="12" height="12" viewBox="0 0 12 12"><path d="M1 1L11 11M11 1L1 11" stroke="#888" stroke-width="1.5"/></svg>
<svg class="a" style="left:51px;top:25px" width="52" height="62" viewBox="0 0 52 62"><path d="M26 1C18 1 12.3 8 12.3 17 12.3 24 15 29.5 19.6 34.6 19.8 36.8 18.6 38 15.5 39.2 7 42.5 1 47 1 53 1 58 8 61 26 61 44 61 51.5 58 51.5 53 51.5 47 45 42.5 36.5 39.2 33.4 38 32.2 36.8 32.4 34.6 37 29.5 39.7 24 39.7 17 39.7 8 34 1 26 1Z" fill="#0a7adb"/></svg>
<svg class="a" style="left:43px;top:99px" width="14" height="16" viewBox="0 0 14 16"><path d="M3.2 1.2C2 1.6 0.7 2.8 0.8 4.6 1 7.8 4.5 12.6 8.6 14.6 10.2 15.3 11.8 14.9 12.7 13.9L13.3 13.2C13.6 12.8 13.5 12.2 13.1 11.9L10.9 10.3C10.5 10 9.9 10.1 9.6 10.5L8.9 11.3C7.2 10.4 5.4 8.4 4.6 6.6L5.5 5.9C5.9 5.6 6 5 5.7 4.6L4.3 1.6C4.1 1.2 3.6 1 3.2 1.2Z" fill="#333"/><path d="M7.8 1.4L12 5.6M12 1.4L7.8 5.6" stroke="#333" stroke-width="1.3"/></svg>
<div class="a" style="left:63px;top:96px;font-size:16px;line-height:22px;color:#333">已挂起</div>
<div class="t" style="top:20px">用户名称：001</div>
<div class="t" style="top:46px">状态：已呼通</div>
<div class="t" style="top:72px">主叫：800394235</div>
<div class="t" style="top:98px">被叫：800394232</div>
<svg class="a" style="left:29px;top:139px" width="17" height="17" viewBox="0 0 17 17"><g fill="none" stroke="#444" stroke-width="1.3"><path d="M0.65 15.6V8.9Q0.65 7.8 1.7 7.8H3.6Q4.65 7.8 4.65 8.9V15.6"/><path d="M11.65 15.6V8.9Q11.65 7.8 12.7 7.8H14.6Q15.65 7.8 15.65 8.9V15.6"/><rect x="6.65" y="1.65" width="3.4" height="9.6" rx="0.9"/></g><ellipse cx="8.35" cy="14.6" rx="1.5" ry="0.95" fill="#444"/></svg><svg class="a" style="left:86px;top:139px" width="16" height="17" viewBox="0 0 16 17"><rect x="0.7" y="0.8" width="14.6" height="15" rx="1" fill="none" stroke="#444" stroke-width="1.3"/><path d="M2.2 8.1L4.9 5.4V10.8ZM13.8 8.1L11.1 5.4V10.8Z" fill="#444"/><rect x="4.3" y="7.1" width="2.8" height="2" rx=".9" fill="#444"/><rect x="8.9" y="7.1" width="2.8" height="2" rx=".9" fill="#444"/></svg><svg class="a" style="left:140px;top:136.5px" width="21" height="19" viewBox="0 0 21 19"><g fill="none" stroke="#444" stroke-width="1.3" stroke-linejoin="round"><path d="M5.6 3.6L2.2 0.9Q1.1 0.3 0.6 1.2Q0.2 2.2 1 3L3.6 6.4"/><path d="M5.6 3.6Q7.6 1.1 9.5 1.1Q12.3 1.4 13.4 3.2L14.4 4.6L19.3 9.9Q20.1 10.9 19.3 11.9L14.7 17H6.4L4 13.1V10.3L3 8.2L3.6 6.4"/><circle cx="13.4" cy="11.3" r="2.9"/><path d="M11.4 16.2L8.6 13.2Q7.6 10.8 7.8 8.6Q8.3 7 9.7 7.7" stroke-width="1" opacity=".7"/></g><circle cx="13.4" cy="11.3" r="1.5" fill="#444" opacity=".45"/><ellipse cx="10" cy="4.9" rx=".9" ry=".6" fill="#444"/></svg>
<div class="a" style="left:48px;top:137px;font-size:14px;line-height:20px;color:#333">强插</div>
<div class="a" style="left:105px;top:137px;font-size:14px;line-height:20px;color:#333">强拆</div>
<div class="a" style="left:163px;top:137px;font-size:14px;line-height:20px;color:#333">遥晕</div>
<div class="btn" style="left:225px;top:133px;width:83px;background:#0a79d8">单呼</div>
</div>
<div class="card" style="left:1099px;top:564px">
<svg class="a" style="left:340px;top:9px" width="12" height="12" viewBox="0 0 12 12"><path d="M1 1L11 11M11 1L1 11" stroke="#888" stroke-width="1.5"/></svg>
<svg class="a" style="left:51px;top:25px" width="52" height="62" viewBox="0 0 52 62"><path d="M26 1C18 1 12.3 8 12.3 17 12.3 24 15 29.5 19.6 34.6 19.8 36.8 18.6 38 15.5 39.2 7 42.5 1 47 1 53 1 58 8 61 26 61 44 61 51.5 58 51.5 53 51.5 47 45 42.5 36.5 39.2 33.4 38 32.2 36.8 32.4 34.6 37 29.5 39.7 24 39.7 17 39.7 8 34 1 26 1Z" fill="#0a7adb"/></svg>
<svg class="a" style="left:43px;top:99px" width="14" height="16" viewBox="0 0 14 16"><path d="M3.2 1.2C2 1.6 0.7 2.8 0.8 4.6 1 7.8 4.5 12.6 8.6 14.6 10.2 15.3 11.8 14.9 12.7 13.9L13.3 13.2C13.6 12.8 13.5 12.2 13.1 11.9L10.9 10.3C10.5 10 9.9 10.1 9.6 10.5L8.9 11.3C7.2 10.4 5.4 8.4 4.6 6.6L5.5 5.9C5.9 5.6 6 5 5.7 4.6L4.3 1.6C4.1 1.2 3.6 1 3.2 1.2Z" fill="#333"/><path d="M7.8 1.4L12 5.6M12 1.4L7.8 5.6" stroke="#333" stroke-width="1.3"/></svg>
<div class="a" style="left:63px;top:96px;font-size:16px;line-height:22px;color:#333">已挂起</div>
<div class="t" style="top:20px">用户名称：001</div>
<div class="t" style="top:46px">状态：已呼通</div>
<div class="t" style="top:72px">主叫：800394235</div>
<div class="t" style="top:98px">被叫：800394232</div>
<svg class="a" style="left:29px;top:139px" width="17" height="17" viewBox="0 0 17 17"><g fill="none" stroke="#444" stroke-width="1.3"><path d="M0.65 15.6V8.9Q0.65 7.8 1.7 7.8H3.6Q4.65 7.8 4.65 8.9V15.6"/><path d="M11.65 15.6V8.9Q11.65 7.8 12.7 7.8H14.6Q15.65 7.8 15.65 8.9V15.6"/><rect x="6.65" y="1.65" width="3.4" height="9.6" rx="0.9"/></g><ellipse cx="8.35" cy="14.6" rx="1.5" ry="0.95" fill="#444"/></svg><svg class="a" style="left:86px;top:139px" width="16" height="17" viewBox="0 0 16 17"><rect x="0.7" y="0.8" width="14.6" height="15" rx="1" fill="none" stroke="#444" stroke-width="1.3"/><path d="M2.2 8.1L4.9 5.4V10.8ZM13.8 8.1L11.1 5.4V10.8Z" fill="#444"/><rect x="4.3" y="7.1" width="2.8" height="2" rx=".9" fill="#444"/><rect x="8.9" y="7.1" width="2.8" height="2" rx=".9" fill="#444"/></svg><svg class="a" style="left:140px;top:136.5px" width="21" height="19" viewBox="0 0 21 19"><g fill="none" stroke="#444" stroke-width="1.3" stroke-linejoin="round"><path d="M5.6 3.6L2.2 0.9Q1.1 0.3 0.6 1.2Q0.2 2.2 1 3L3.6 6.4"/><path d="M5.6 3.6Q7.6 1.1 9.5 1.1Q12.3 1.4 13.4 3.2L14.4 4.6L19.3 9.9Q20.1 10.9 19.3 11.9L14.7 17H6.4L4 13.1V10.3L3 8.2L3.6 6.4"/><circle cx="13.4" cy="11.3" r="2.9"/><path d="M11.4 16.2L8.6 13.2Q7.6 10.8 7.8 8.6Q8.3 7 9.7 7.7" stroke-width="1" opacity=".7"/></g><circle cx="13.4" cy="11.3" r="1.5" fill="#444" opacity=".45"/><ellipse cx="10" cy="4.9" rx=".9" ry=".6" fill="#444"/></svg>
<div class="a" style="left:48px;top:137px;font-size:14px;line-height:20px;color:#333">强插</div>
<div class="a" style="left:105px;top:137px;font-size:14px;line-height:20px;color:#333">强拆</div>
<div class="a" style="left:163px;top:137px;font-size:14px;line-height:20px;color:#333">遥晕</div>
<div class="btn" style="left:225px;top:133px;width:83px;background:#0a79d8">单呼</div>
</div>
<div class="rcard" style="top:119px;height:298px">
<div class="ttl" style="top:22px;line-height:26px">信息面板</div><div class="sep" style="top:61px"></div>
<div class="a" style="left:34px;top:86px;font-size:14px;line-height:20px;color:#333">部门：省级测试-test</div>
<div class="a" style="left:34px;top:112px;font-size:14px;line-height:20px;color:#333">ID号码：10001</div>
<div class="a" style="left:34px;top:198px;font-size:14px;line-height:20px;color:#e8141b">状态：已连接</div>
</div>
<div class="rcard" style="top:454px;height:131px">
<div class="ttl" style="top:21px;line-height:26px">话权申请</div><div class="sep" style="top:61px"></div>
<div class="btn" style="left:53px;top:81px;width:206px;background:#999">申请话语权</div>
</div>
<div class="rcard" style="top:623px;height:131px">
<div class="ttl" style="top:21px;line-height:26px">监听操作</div><div class="sep" style="top:61px"></div>
<div class="btn" style="left:53px;top:83px;width:206px;background:#e88e12">监听</div>
</div>
<div class="panel" style="left:271px;top:808px;width:1640px;height:290px;border-radius:0;box-shadow:none"></div>
<svg class="a" style="left:1025px;top:786px;z-index:3" width="135" height="26" viewBox="0 0 135 26"><defs><filter id="ts" x="-20%" y="-50%" width="140%" height="200%"><feDropShadow dx="0" dy="-1" stdDeviation="1.5" flood-opacity=".35"/></filter></defs><path d="M9 24L14 9Q15.5 5 20 5H115Q119.5 5 121 9L126 24Z" fill="#fafafa" filter="url(#ts)"/><rect x="0" y="22" width="135" height="4" fill="#fafafa"/><path d="M60 10.5L65.5 15.5 71 10.5" stroke="#555" stroke-width="1.4" fill="none"/></svg>
<div class="btab on" style="left:296px">任务记录</div>
<div class="btab" style="left:409px">签到记录</div>
<div class="btab" style="left:522px">报警记录</div>
<div class="btab" style="left:635px">通话记录</div>
<div class="btab" style="left:748px">录音记录</div>
<div class="btab" style="left:861px">监听记录</div>
<div class="btab" style="left:974px">系统日志</div>
<svg class="a" style="left:1582px;top:825px" width="22" height="18" viewBox="0 0 22 18"><circle cx="8" cy="8" r="6" stroke="#0a7ade" stroke-width="2.4" fill="none"/><path d="M12.5 12.3L17.5 16.6" stroke="#0a7ade" stroke-width="3.2" stroke-linecap="round"/></svg>
<div class="a" style="left:1606px;top:824px;font-size:14px;line-height:20px;color:#444">搜索</div>
<svg class="a" style="left:1652px;top:822px" width="28" height="24" viewBox="0 0 28 24"><path d="M8.1 5.8V18.2Q8.1 19 8.9 19H20.2Q21 19 21 18.2V15" stroke="#0a7ade" stroke-width="2" fill="none" stroke-linecap="round"/><path d="M11.2 16.4Q11.6 9.8 16 8.6L16.3 4.6 22.8 9.4 17.8 15.4 17.3 12.2Q13.8 12.4 12.6 16.4Z" fill="#0a7ade"/></svg>
<div class="a" style="left:1679px;top:824px;font-size:14px;line-height:20px;color:#444">导出</div>
<svg class="a" style="left:1726px;top:822px" width="28" height="24" viewBox="0 0 28 24"><g stroke="#0a7ade" stroke-width="1.8" fill="none" stroke-linecap="round"><path d="M8.6 6.3A7.5 7.5 0 0 1 20.9 12.4"/><path d="M18.2 18.3A7.5 7.5 0 0 1 5.9 12"/></g><path d="M18.9 12.3H23L21 15.6ZM3.8 11.9H7.9L6 8.8Z" fill="#0a7ade"/></svg>
<div class="a" style="left:1753px;top:824px;font-size:14px;line-height:20px;color:#444">刷新</div>
<svg class="a" style="left:1802px;top:822px" width="28" height="24" viewBox="0 0 28 24"><g stroke="#0a7ade" fill="none" stroke-linecap="round"><path d="M20.6 14V6.8Q20.6 5.5 19.3 5.5H7.8Q6.6 5.5 6.6 6.8V18Q6.6 19.3 7.8 19.3H15.4" stroke-width="1.6"/><path d="M9.6 9.2H17.4M9.6 12.7H11.6M9.6 16.4H11.6" stroke-width="1.9"/><circle cx="16" cy="14.7" r="2.2" stroke-width="1.6"/><path d="M17.8 16.8L19.8 19" stroke-width="1.8"/></g></svg>
<div class="a" style="left:1829px;top:824px;font-size:14px;line-height:20px;color:#444">查看全部</div>
<div class="a" style="left:296px;top:856px;width:1590px;height:26px;background:#0a7cdf"></div>
<div class="a" style="left:310px;top:861px;width:16px;height:16px;border:1.5px solid #fff;border-radius:2px"></div>
<div class="th" style="left:322px;width:68px;text-align:center">序号</div>
<div class="th" style="left:395px;width:82px;text-align:center">创建人</div>
<div class="th" style="left:487px;width:96px;text-align:center">任务级别</div>
<div class="th" style="left:639px;width:96px;text-align:center">创建时间</div>
<div class="th" style="left:897px;width:96px;text-align:center">任务地址</div>
<div class="th" style="left:1128px;width:96px;text-align:center">任务内容</div>
<div class="th" style="left:1233px;width:96px;text-align:center">执行人员</div>
<div class="th" style="left:1337px;width:96px;text-align:center">任务状态</div>
<div class="th" style="left:1468px;width:96px;text-align:center">更新时间</div>
<div class="th" style="left:1631px;width:96px;text-align:center">执行备注</div>
<div class="th" style="left:1786px;width:68px;text-align:center">反馈</div>
<div class="row" style="top:885px"></div>
<div class="a" style="left:310px;top:892px;width:16px;height:16px;border:1.3px solid #999;border-radius:2px;background:transparent"></div>
<div class="cell" style="left:238px;top:891px;width:240px;text-align:center">1</div>
<div class="cell" style="left:421px;top:889px">lijie</div>
<div class="cell" style="left:567px;top:890px;width:240px;text-align:center;color:#444"><span class="dt">2018-08-13 08:52:33</span></div>
<div class="cell" style="left:826px;top:890px;width:240px;text-align:center;color:#444"><span style="font-size:13.7px">深圳市福田区彩田村水源大厦</span></div>
<div class="cell" style="left:1056px;top:890px;width:240px;text-align:center;color:#444">巡视</div>
<div class="cell" style="left:1161px;top:890px;width:240px;text-align:center;color:#444">李杰</div>
<div class="cell" style="left:1265px;top:890px;width:240px;text-align:center;color:#444">执行中</div>
<div class="cell" style="left:1396px;top:890px;width:240px;text-align:center;color:#444"><span class="dt">2018-08-27 14:41</span></div>
<div class="cell" style="left:1700px;top:890px;width:240px;text-align:center;color:#e3141b">已超时</div>
<div class="row" style="top:916px"></div>
<div class="a" style="left:310px;top:923px;width:16px;height:16px;border:1.3px solid #999;border-radius:2px;background:transparent"></div>
<div class="cell" style="left:238px;top:922px;width:240px;text-align:center">1</div>
<div class="cell" style="left:421px;top:920px">lijie</div>
<div class="cell" style="left:567px;top:921px;width:240px;text-align:center;color:#444"><span class="dt">2018-08-13 08:52:33</span></div>
<div class="cell" style="left:826px;top:921px;width:240px;text-align:center;color:#444"><span style="font-size:13.7px">深圳市福田区彩田村水源大厦</span></div>
<div class="cell" style="left:1056px;top:921px;width:240px;text-align:center;color:#444">巡视</div>
<div class="cell" style="left:1161px;top:921px;width:240px;text-align:center;color:#444">李杰</div>
<div class="cell" style="left:1265px;top:921px;width:240px;text-align:center;color:#444">执行中</div>
<div class="cell" style="left:1396px;top:921px;width:240px;text-align:center;color:#444"><span class="dt">2018-08-27 14:41</span></div>
<div class="cell" style="left:1700px;top:921px;width:240px;text-align:center;color:#2a88dd">已完成</div>
<div class="row" style="top:947px"></div>
<div class="a" style="left:310px;top:954px;width:16px;height:16px;border:1.3px solid #999;border-radius:2px;background:transparent"></div>
<div class="cell" style="left:238px;top:953px;width:240px;text-align:center">1</div>
<div class="cell" style="left:421px;top:951px">lijie</div>
<div class="cell" style="left:567px;top:952px;width:240px;text-align:center;color:#444"><span class="dt">2018-08-13 08:52:33</span></div>
<div class="cell" style="left:826px;top:952px;width:240px;text-align:center;color:#444"><span style="font-size:13.7px">深圳市福田区彩田村水源大厦</span></div>
<div class="cell" style="left:1056px;top:952px;width:240px;text-align:center;color:#444">巡视</div>
<div class="cell" style="left:1161px;top:952px;width:240px;text-align:center;color:#444">李杰</div>
<div class="cell" style="left:1265px;top:952px;width:240px;text-align:center;color:#444">执行中</div>
<div class="cell" style="left:1396px;top:952px;width:240px;text-align:center;color:#444"><span class="dt">2018-08-27 14:41</span></div>
<div class="cell" style="left:1700px;top:952px;width:240px;text-align:center;color:#2a88dd">已完成</div>
<div class="row" style="top:978px"></div>
<div class="a" style="left:310px;top:985px;width:16px;height:16px;border:1.3px solid #999;border-radius:2px;background:transparent"></div>
<div class="cell" style="left:238px;top:984px;width:240px;text-align:center">1</div>
<div class="cell" style="left:421px;top:982px">lijie</div>
<div class="cell" style="left:567px;top:983px;width:240px;text-align:center;color:#444"><span class="dt">2018-08-13 08:52:33</span></div>
<div class="cell" style="left:826px;top:983px;width:240px;text-align:center;color:#444"><span style="font-size:13.7px">深圳市福田区彩田村水源大厦</span></div>
<div class="cell" style="left:1056px;top:983px;width:240px;text-align:center;color:#444">巡视</div>
<div class="cell" style="left:1161px;top:983px;width:240px;text-align:center;color:#444">李杰</div>
<div class="cell" style="left:1265px;top:983px;width:240px;text-align:center;color:#444">执行中</div>
<div class="cell" style="left:1396px;top:983px;width:240px;text-align:center;color:#444"><span class="dt">2018-08-27 14:41</span></div>
<div class="cell" style="left:1700px;top:983px;width:240px;text-align:center;color:#2a88dd">已完成</div>
<div class="row" style="top:1009px"></div>
<div class="a" style="left:310px;top:1016px;width:16px;height:16px;border:1.3px solid #999;border-radius:2px;background:transparent"></div>
<div class="cell" style="left:238px;top:1015px;width:240px;text-align:center">1</div>
<div class="cell" style="left:421px;top:1013px">lijie</div>
<div class="cell" style="left:567px;top:1014px;width:240px;text-align:center;color:#444"><span class="dt">2018-08-13 08:52:33</span></div>
<div class="cell" style="left:826px;top:1014px;width:240px;text-align:center;color:#444"><span style="font-size:13.7px">深圳市福田区彩田村水源大厦</span></div>
<div class="cell" style="left:1056px;top:1014px;width:240px;text-align:center;color:#444">巡视</div>
<div class="cell" style="left:1161px;top:1014px;width:240px;text-align:center;color:#444">李杰</div>
<div class="cell" style="left:1265px;top:1014px;width:240px;text-align:center;color:#444">执行中</div>
<div class="cell" style="left:1396px;top:1014px;width:240px;text-align:center;color:#444"><span class="dt">2018-08-27 14:41</span></div>
<div class="cell" style="left:1700px;top:1014px;width:240px;text-align:center;color:#2a88dd">已完成</div>
<div class="row" style="top:1040px"></div>
<div class="a" style="left:310px;top:1047px;width:16px;height:16px;border:1.3px solid #999;border-radius:2px;background:transparent"></div>
<div class="cell" style="left:238px;top:1046px;width:240px;text-align:center">1</div>
<div class="cell" style="left:421px;top:1044px">lijie</div>
<div class="cell" style="left:567px;top:1045px;width:240px;text-align:center;color:#444"><span class="dt">2018-08-13 08:52:33</span></div>
<div class="cell" style="left:826px;top:1045px;width:240px;text-align:center;color:#444"><span style="font-size:13.7px">深圳市福田区彩田村水源大厦</span></div>
<div class="cell" style="left:1056px;top:1045px;width:240px;text-align:center;color:#444">巡视</div>
<div class="cell" style="left:1161px;top:1045px;width:240px;text-align:center;color:#444">李杰</div>
<div class="cell" style="left:1265px;top:1045px;width:240px;text-align:center;color:#444">执行中</div>
<div class="cell" style="left:1396px;top:1045px;width:240px;text-align:center;color:#444"><span class="dt">2018-08-27 14:41</span></div>
<div class="cell" style="left:1700px;top:1045px;width:240px;text-align:center;color:#2a88dd">已完成</div>
</body></html>
